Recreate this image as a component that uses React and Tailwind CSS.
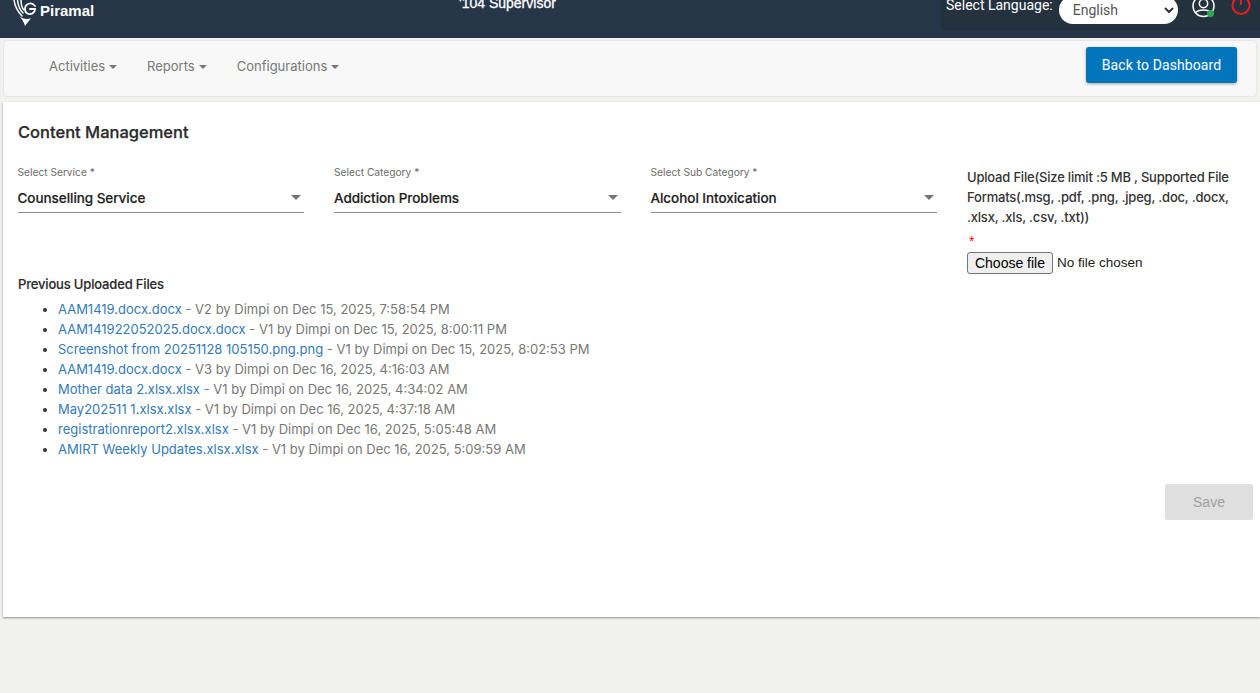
import React from "react";

const files = [
  ["AAM1419.docx.docx", "V2 by Dimpi on Dec 15, 2025, 7:58:54 PM"],
  ["AAM141922052025.docx.docx", "V1 by Dimpi on Dec 15, 2025, 8:00:11 PM"],
  ["Screenshot from 20251128 105150.png.png", "V1 by Dimpi on Dec 15, 2025, 8:02:53 PM"],
  ["AAM1419.docx.docx", "V3 by Dimpi on Dec 16, 2025, 4:16:03 AM"],
  ["Mother data 2.xlsx.xlsx", "V1 by Dimpi on Dec 16, 2025, 4:34:02 AM"],
  ["May202511 1.xlsx.xlsx", "V1 by Dimpi on Dec 16, 2025, 4:37:18 AM"],
  ["registrationreport2.xlsx.xlsx", "V1 by Dimpi on Dec 16, 2025, 5:05:48 AM"],
  ["AMIRT Weekly Updates.xlsx.xlsx", "V1 by Dimpi on Dec 16, 2025, 5:09:59 AM"],
];

const Caret = () => (
  <span className="ml-[4px] inline-block align-middle border-x-[4px] border-t-[4px] border-x-transparent border-t-[#777]" />
);

const NavItem = ({ label }) => (
  <span className="text-[13px] text-[#777777]">
    {label}
    <Caret />
  </span>
);

const Dropdown = ({ label, value }) => (
  <div className="w-[286.5px]">
    <div className="-mt-[2px] text-[10.2px] leading-[14px] text-[#6b6b6b]">{label}</div>
    <div className="flex items-center justify-between h-[34px] pt-[5px] border-b border-[#8a8a8a] pr-[3px]">
      <span className="text-[13.5px] tracking-[-0.05px] font-medium text-[#1f1f1f] [-webkit-text-stroke:0.2px_#1f1f1f]">{value}</span>
      <span className="-mt-[1px] border-x-[5px] border-t-[5px] border-x-transparent border-t-[#757575]" />
    </div>
  </div>
);

const Logo = () => (
  <svg width="24" height="26" viewBox="0 0 24 26" fill="none" stroke="white" strokeLinecap="round">
    <path d="M2 0 C3 7 6 12 10 16" strokeWidth="1.5" />
    <path d="M5.5 0 C6 5 8 10 11 13" strokeWidth="1.5" />
    <path d="M9 0 C9 4 10 8 12 10" strokeWidth="1.5" />
    <path d="M23 6 C19 1 13 4 13 9 C13 14 19 16 22 12 C23 11 23 10 23 9 L18 9" strokeWidth="1.8" />
    <path d="M7 16 C10 19 16 20 19 18 L13 26 C12 22 10 19 7 16 Z" fill="white" stroke="none" />
  </svg>
);

const UserIcon = () => (
  <div className="relative w-[24px] h-[24px]">
    <svg width="23" height="23" viewBox="0 0 23 23" fill="none" stroke="white" strokeWidth="1.5">
      <circle cx="11.5" cy="9" r="10.5" />
      <circle cx="11.5" cy="6.5" r="4.2" />
      <path d="M3.5 16 C6 12 17 12 19.5 16" />
    </svg>
    <span className="absolute right-[2px] top-[13px] w-[7px] h-[7px] rounded-full bg-[#2dab4f]" />
  </div>
);

const PowerIcon = () => (
  <svg width="22" height="20" viewBox="0 0 22 20" fill="none" stroke="#f01c1c" strokeWidth="2" strokeLinecap="round">
    <path d="M6.5 -0.8 A8.5 8.5 0 1 0 15.5 -0.8" />
    <path d="M11 -3 L11 5" />
  </svg>
);

export default function App() {
  return (
    <div className="h-[693px] overflow-hidden bg-[#f1f1f0] font-['Inter',sans-serif]">
      <header className="flex h-[38px] bg-[#263648]">
        <div className="flex items-start w-[459px] pl-[12px]">
          <Logo />
          <span className="ml-[4px] text-[15px] leading-[21px] font-bold text-white font-['Liberation_Sans',sans-serif]">Piramal</span>
        </div>
        <div className="-mt-[7px] text-[14px] leading-[20px] text-white font-['Liberation_Sans',sans-serif] [-webkit-text-stroke:0.3px_white]">'104 Supervisor</div>
        <div className="ml-auto flex items-start h-[30px] w-[319px] bg-[#24323f] pl-[5px] font-['Roboto',sans-serif]">
          <span className="-mt-[3px] text-[14px] leading-[16px] text-white">Select Language:</span>
          <div className="ml-[6px] -mt-[4px] flex items-center justify-between w-[119px] h-[28px] rounded-[14px] bg-white pl-[14px] pr-[4px] text-[14px] text-[#555555]">
            English
            <svg width="10" height="7" viewBox="0 0 10 7" fill="none" stroke="#333" strokeWidth="2"><path d="M1 1 L5 5 L9 1" /></svg>
          </div>
          <div className="ml-[14px] -mt-[3px]"><UserIcon /></div>
          <div className="ml-[14px] -mt-[1px]"><PowerIcon /></div>
        </div>
      </header>

      <nav className="flex items-center justify-between h-[57px] mx-[3px] mt-[2px] pl-[45px] pr-[20px] bg-[#f8f8f8] border border-[#e7e7e7] rounded-[4px]">
        <div className="flex gap-[30px] -mt-[4px]">
          <NavItem label="Activities" />
          <NavItem label="Reports" />
          <NavItem label="Configurations" />
        </div>
        <button className="w-[151px] h-[36px] -mr-[1px] -mt-[7px] rounded-[3px] bg-[#0275bd] text-[14px] tracking-[0.1px] text-white font-['Roboto',sans-serif] shadow-[0_1px_3px_rgba(0,0,0,0.35)]">
          Back to Dashboard
        </button>
      </nav>

      <main className="relative h-[515px] ml-[3px] mt-[5px] bg-white pl-[15px] pt-[19px] shadow-[0_1px_2px_rgba(0,0,0,0.4)]">
        <h1 className="text-[16.5px] leading-[22px] font-medium text-[#2b2b2b] [-webkit-text-stroke:0.25px_#2b2b2b]">Content Management</h1>

        <div className="flex mt-[24px]">
          <div className="flex gap-[30px] -ml-[0.5px]">
            <Dropdown label="Select Service *" value="Counselling Service" />
            <Dropdown label="Select Category *" value="Addiction Problems" />
            <Dropdown label="Select Sub Category *" value="Alcohol Intoxication" />
          </div>
          <div className="ml-[30px] w-[285px] text-[13px] leading-[20px] font-medium tracking-[-0.2px] text-[#333333]">
            <div>Upload File(Size limit :5 MB , Supported File Formats(.msg, .pdf, .png, .jpeg, .doc, .docx, .xlsx, .xls, .csv, .txt))</div>
            <div className="mt-[4px] h-[20px] pl-[2px] text-[14px] text-[#ee1111] font-['Liberation_Sans',sans-serif]">*</div>
            <div className="flex items-center mt-[1px] text-[13.5px] font-normal tracking-normal text-[#222222] font-['Liberation_Sans',sans-serif]">
              <button className="w-[86px] h-[22px] rounded-[3px] border border-[#767676] bg-[#efefef] text-[14px] leading-[20px] text-black">Choose file</button>
              <span className="ml-[4px]">No file chosen</span>
            </div>
          </div>
        </div>

        <h2 className="text-[13px] leading-[20px] font-medium tracking-[-0.17px] text-[#2b2b2b] [-webkit-text-stroke:0.15px_#2b2b2b]">Previous Uploaded Files</h2>
        <ul className="mt-[5px] pl-[40px] list-disc text-[13px] leading-[20px] text-[#777777] marker:text-[#333333]">
          {files.map(([name, info], i) => (
            <li key={i}>
              <a className="text-[#337ab7]">{name}</a> - {info}
            </li>
          ))}
        </ul>

        <div className="flex justify-end pr-[7px] mt-[25px]">
          <button className="w-[88px] h-[36px] rounded-[2px] bg-[#e0e0e0] text-[14px] text-[#a0a0a0] font-['Liberation_Sans',sans-serif]">Save</button>
        </div>
      </main>
    </div>
  );
}
